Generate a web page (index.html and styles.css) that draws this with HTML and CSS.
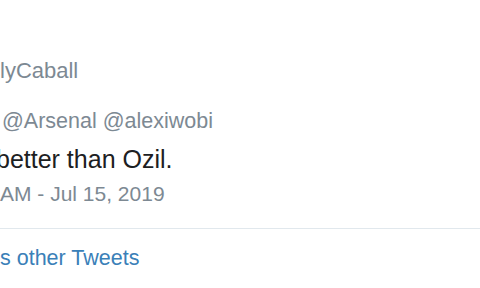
FILE: index.html
```html
<!DOCTYPE html>
<html>
<head>
<meta charset="utf-8">
<title>Tweet</title>
<link rel="stylesheet" href="styles.css">
</head>
<body>
<div class="tweet">
   <div class="header">
      <div class="handle">lyCaball</div>
   </div>
   <div class="reply">@Arsenal @alexiwobi</div>
   <div class="text">better than Ozil.</div>
   <div class="date">AM - Jul 15, 2019</div>
   <div class="divider"></div>
   <div class="more">s other Tweets</div>
</div>
</body>
</html>
```

FILE: styles.css
```css
body{margin:0;background:#fff;font-family:"Liberation Sans",Arial,sans-serif;overflow:hidden;}
.tweet{padding-top:59px;}
.header{line-height:24px;}
.handle{font-size:22px;color:#7d8993;}
.reply{font-size:21.5px;line-height:24px;color:#7d8993;margin-top:26px;padding-left:2px;}
.text{font-size:25px;line-height:30px;color:#1c2022;margin-top:11px;margin-left:-4px;}
.date{font-size:21px;line-height:24px;color:#7d8993;margin-top:8px;}
.divider{height:1px;background:#e1e8ed;margin-top:22px;}
.more{font-size:21.5px;line-height:24px;color:#3a80b8;margin-top:17px;}
```
